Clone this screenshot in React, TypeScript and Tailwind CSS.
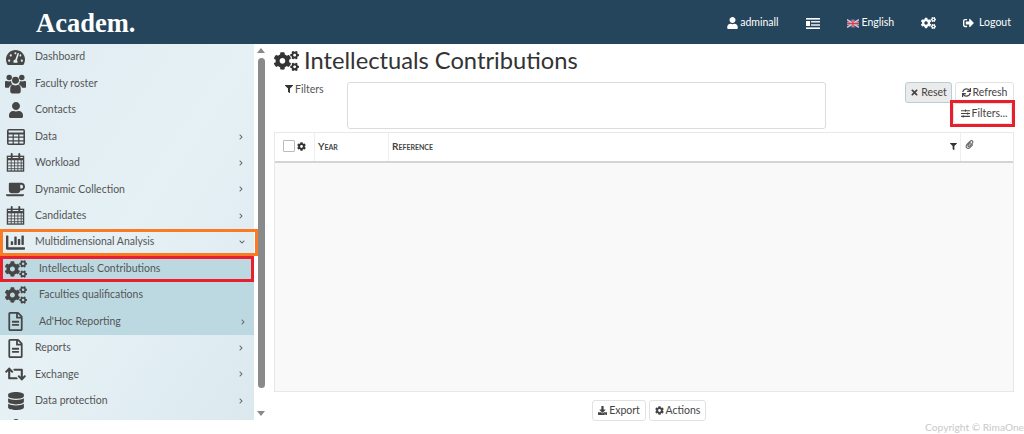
import React from "react";
import {
  FaChartBar,
  FaChevronDown,
  FaChevronRight,
  FaCoffee,
  FaCog,
  FaCogs,
  FaDatabase,
  FaDownload,
  FaFilter,
  FaPaperclip,
  FaRegFileAlt,
  FaRetweet,
  FaSignOutAlt,
  FaSlidersH,
  FaSync,
  FaTachometerAlt,
  FaTimes,
  FaUser,
} from "react-icons/fa";

function CalendarIcon({ className }: { className?: string }) {
  return (
    <svg viewBox="0 0 20 20" className={className} fill="none" stroke="currentColor">
      <rect x="1.5" y="3.5" width="17" height="15.5" strokeWidth="1.4" />
      <path d="M1.5 6.5h17" strokeWidth="2.4" />
      <path d="M1.5 10.5h17M1.5 13.5h17M1.5 16.5h17M5.5 7v12M9 7v12M12.5 7v12M16 7v12" strokeWidth="0.9" />
      <path d="M6 1v4M14 1v4" strokeWidth="2" strokeLinecap="round" />
    </svg>
  );
}

function GridIcon({ className }: { className?: string }) {
  return (
    <svg viewBox="0 0 18 16" className={className} fill="none" stroke="currentColor">
      <rect x="0.8" y="0.8" width="16.4" height="14.4" rx="1" strokeWidth="1.6" />
      <path d="M0.8 4.5h16.4" strokeWidth="2" />
      <path d="M0.8 8.2h16.4M0.8 11.8h16.4M6.2 4v11M11.8 4v11" strokeWidth="1.2" />
    </svg>
  );
}

// fa-group look: two people behind one in front
function GroupIcon({ className }: { className?: string }) {
  return (
    <svg viewBox="0 0 20 19" className={className} fill="currentColor">
      <circle cx="4" cy="3.4" r="2.6" />
      <circle cx="16" cy="3.4" r="2.6" />
      <circle cx="10" cy="6" r="3.3" />
      <path d="M0 7.5C0 6.6.8 6.4 1.6 6.6c1.4.6 3 .6 4.2 0 .1 1.5.5 2.5 1.3 3.4-1.7.5-2.8 1.6-3.4 3H1c-.6 0-1-.4-1-1zM20 7.5c0-.9-.8-1.1-1.6-.9-1.4.6-3 .6-4.2 0-.1 1.5-.5 2.5-1.3 3.4 1.7.5 2.8 1.6 3.4 3H19c.6 0 1-.4 1-1z" />
      <path d="M5 13.5c0-2 1.2-3.2 2.6-3.2 1.5.7 3.3.7 4.8 0 1.4 0 2.6 1.2 2.6 3.2v3.2c0 1-.8 1.8-2 1.8H7c-1.2 0-2-.8-2-1.8z" />
    </svg>
  );
}

function MenuToggleIcon() {
  return (
    <svg viewBox="0 0 14 11" className="h-[11px] w-[14px]" fill="#fff">
      <rect x="0" y="0" width="14" height="1.6" />
      <rect x="0" y="9.4" width="14" height="1.6" />
      <rect x="5" y="3.1" width="9" height="1.4" />
      <rect x="5" y="6.3" width="9" height="1.4" />
      <rect x="0" y="3" width="4" height="5" />
    </svg>
  );
}

function FlagIcon() {
  return (
    <svg viewBox="0 0 14 9" className="h-[9px] w-[12px]">
      <rect width="14" height="9" fill="#3b4f86" />
      <path d="M0 0l14 9M14 0L0 9" stroke="#e3c9d0" strokeWidth="1.8" />
      <path d="M7 0v9M0 4.5h14" stroke="#e3c9d0" strokeWidth="3" />
      <path d="M7 0v9M0 4.5h14" stroke="#d2404f" strokeWidth="1.6" />
    </svg>
  );
}

type Item = { label: string; icon: React.ReactNode; arrow?: "right" | "down" };

const iconCls = "h-[19px] w-[19px]";

const topItems: Item[] = [
  { label: "Dashboard", icon: <FaTachometerAlt className={iconCls} /> },
  { label: "Faculty roster", icon: <GroupIcon className="h-[20px] w-[21px]" /> },
  { label: "Contacts", icon: <FaUser className="h-[16px] w-[16px]" /> },
  { label: "Data", icon: <GridIcon className="h-[16px] w-[18px]" />, arrow: "right" },
  { label: "Workload", icon: <CalendarIcon className={iconCls} />, arrow: "right" },
  { label: "Dynamic Collection", icon: <FaCoffee className={iconCls} />, arrow: "right" },
  { label: "Candidates", icon: <CalendarIcon className={iconCls} />, arrow: "right" },
];

const bottomItems: Item[] = [
  { label: "Reports", icon: <FaRegFileAlt className={iconCls} />, arrow: "right" },
  { label: "Exchange", icon: <FaRetweet className="h-[20px] w-[21px]" />, arrow: "right" },
  { label: "Data protection", icon: <FaDatabase className="h-[18px] w-[18px]" />, arrow: "right" },
];

function MenuRow({ item, sub, children }: { item: Item; sub?: boolean; children?: React.ReactNode }) {
  return (
    <div className="relative flex h-[26.45px] items-center">
      <span className="flex w-[31px] shrink-0 justify-center text-[#464646]">{item.icon}</span>
      <span className={`${sub ? "ml-[8px]" : "ml-[4px]"} flex-1 text-[10.5px] text-[#555]`}>{item.label}</span>
      {item.arrow === "right" && <FaChevronRight className={`${sub ? "mr-[8px]" : "mr-[10px]"} h-[6px] w-[6px] text-[#666]`} />}
      {item.arrow === "down" && <FaChevronDown className="mr-[9px] h-[6px] w-[6px] text-[#666]" />}
      {children}
    </div>
  );
}

function Sidebar() {
  return (
    <aside className="flex h-[376px] w-[268px] shrink-0 overflow-hidden">
      <nav className="h-full w-[254px] shrink-0 bg-gradient-to-br from-[#dfecf1] via-[#e6f1f5] to-[#dbe9ef]">
        {topItems.map((item) => (
          <MenuRow key={item.label} item={item} />
        ))}
        <MenuRow item={{ label: "Multidimensional Analysis", icon: <FaChartBar className="h-[19px] w-[21px]" />, arrow: "down" }}>
          <div className="absolute inset-y-0 left-0 right-[-4px] border-[3px] border-[#fb7a24]" />
        </MenuRow>
        <div className="bg-[#bcd9e2]">
          <MenuRow sub item={{ label: "Intellectuals Contributions", icon: <FaCogs className="h-[20px] w-[22px]" /> }}>
            <div className="absolute inset-0 border-[3px] border-[#e8202e]" />
          </MenuRow>
          <MenuRow sub item={{ label: "Faculties qualifications", icon: <FaCogs className="h-[20px] w-[22px]" /> }} />
          <MenuRow sub item={{ label: "Ad'Hoc Reporting", icon: <FaRegFileAlt className={iconCls} />, arrow: "right" }} />
        </div>
        {bottomItems.map((item) => (
          <MenuRow key={item.label} item={item} />
        ))}
        <MenuRow item={{ label: "", icon: <FaUser className="h-[16px] w-[16px]" /> }} />
      </nav>
      <div className="flex w-[14px] shrink-0 flex-col items-center bg-white pt-[4px]">
        <div className="h-0 w-0 border-x-[4px] border-b-[5px] border-x-transparent border-b-[#8a8a8a]" />
        <div className="mt-[5px] h-[330px] w-[7px] rounded-full bg-[#8a8a8a]" />
        <div className="mt-[23px] h-0 w-0 border-x-[4px] border-t-[5px] border-x-transparent border-t-[#8a8a8a]" />
      </div>
    </aside>
  );
}

function Btn({ children, className = "" }: { children: React.ReactNode; className?: string }) {
  return (
    <button className={`flex h-[21px] items-center justify-center gap-[2px] rounded-[3px] border border-[#e2e2e2] bg-white text-[10.5px] text-[#444] ${className}`}>
      {children}
    </button>
  );
}

function Header() {
  return (
    <header className="flex h-[44px] shrink-0 items-center bg-[#24455c] pl-[36px] pr-[13px] pt-[2px] text-[10.5px] text-white">
      <span className="flex-1 font-['Liberation_Serif',serif] text-[26.5px] font-bold leading-none">Academ.</span>
      <span className="flex items-center gap-[2px]"><FaUser className="h-[12px] w-[11px]" />adminall</span>
      <span className="ml-[28px]"><MenuToggleIcon /></span>
      <span className="ml-[27px] flex items-center gap-[2px]"><FlagIcon />English</span>
      <FaCogs className="ml-[27px] h-[14px] w-[15px]" />
      <span className="ml-[27px] flex items-center gap-[5px]"><FaSignOutAlt className="h-[12px] w-[11px]" />Logout</span>
    </header>
  );
}

function Content() {
  return (
    <main className="flex w-[746px] shrink-0 flex-col pl-[6px]">
      <div className="flex h-[38px] items-center gap-[5px] pb-[4px] text-[#333]">
        <FaCogs className="h-[22px] w-[25px]" />
        <h1 className="text-[23.7px] leading-none text-[#333]">Intellectuals Contributions</h1>
      </div>
      <div className="flex h-[50px]">
        <div className="flex w-[73px] items-start gap-[2px] pl-[11px] text-[10.5px] leading-[14px] text-[#555]">
          <FaFilter className="mt-[3px] h-[8px] w-[8px] text-[#333]" />
          Filters
        </div>
        <div className="h-[47px] w-[479px] rounded-[3px] border border-[#dcdcdc]" />
        <div className="ml-[79px] flex w-[109px] flex-wrap content-start justify-end gap-x-[3px]">
          <Btn className="w-[47px] !border-[#b5cfd8] !bg-[#ebebeb]"><FaTimes className="h-[9px] w-[9px]" />Reset</Btn>
          <Btn className="w-[59px]"><FaSync className="h-[9px] w-[9px]" />Refresh</Btn>
          <div className="relative mr-[2px] w-[59px]">
            <Btn className="w-[59px] pl-[3px]"><FaSlidersH className="h-[9px] w-[9px]" />Filters...</Btn>
            <div className="absolute inset-x-[-3px] top-[-3px] h-[27px] border-[3px] border-[#e8202e]" />
          </div>
        </div>
      </div>
      <section className="flex h-[260px] flex-col border border-[#e8e8e8]">
        <div className="flex h-[30px] border-b-2 border-[#d4d4d4] text-[10px] font-bold text-[#444] [font-variant:small-caps]">
          <div className="flex w-[40px] items-center gap-[2px] border-r border-[#eee] pb-[2px] pl-[8px]">
            <span className="h-[12px] w-[12px] rounded-[1px] border border-[#bbb] bg-white" />
            <FaCog className="h-[9px] w-[9px] text-[#333]" />
          </div>
          <div className="flex w-[74px] items-center border-r border-[#eee] pb-[2px] pl-[3px]">Year</div>
          <div className="flex flex-1 items-center justify-between border-r border-[#eee] pb-[2px] pl-[3px] pr-[3px]">
            Reference
            <FaFilter className="h-[7px] w-[7px] text-[#333]" />
          </div>
          <div className="flex w-[52px] items-start pl-[4px] pt-[7px]">
            <FaPaperclip className="h-[9px] w-[9px] text-[#666]" />
          </div>
        </div>
        <div className="flex-1 bg-[#f9f9f9]" />
      </section>
      <div className="mt-[8px] flex justify-center gap-[3px] pl-[10px]">
        <Btn className="w-[54px]"><FaDownload className="h-[9px] w-[9px]" />Export</Btn>
        <Btn className="w-[57px]"><FaCog className="h-[9px] w-[9px]" />Actions</Btn>
      </div>
    </main>
  );
}

export default function App() {
  return (
    <div className="flex h-[434px] w-[1024px] flex-col overflow-hidden bg-white font-['Lato',sans-serif]">
      <Header />
      <div className="flex shrink-0">
        <Sidebar />
        <Content />
      </div>
      <footer className="-mt-[1px] shrink-0 whitespace-nowrap text-right text-[10.2px] leading-[14px] text-[#c8c8c8]">Copyright © RimaOne</footer>
    </div>
  );
}
